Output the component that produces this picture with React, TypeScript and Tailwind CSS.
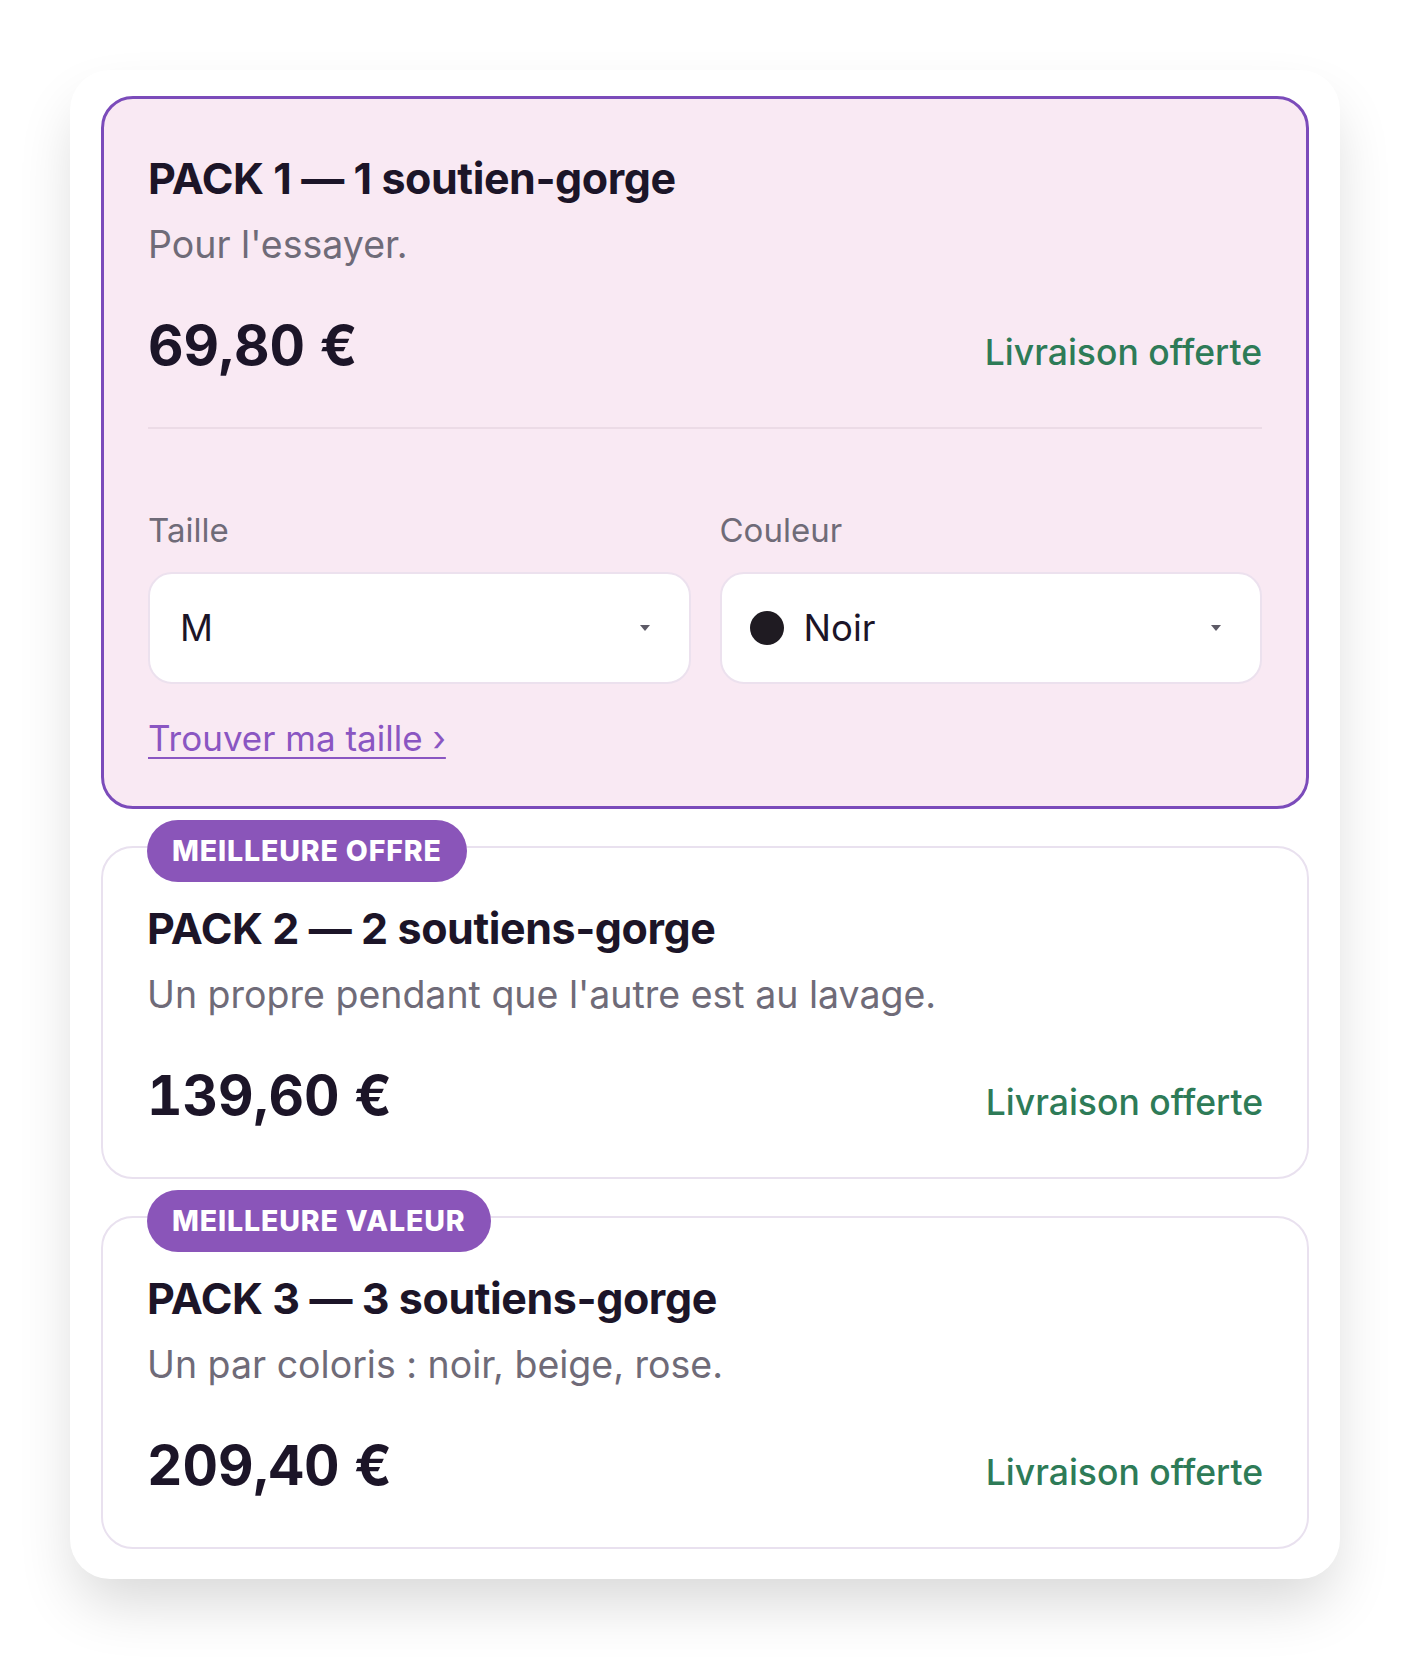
import React from 'react';

const packs = [
  {
    id: 2,
    badge: 'MEILLEURE OFFRE',
    title: 'PACK 2 — 2 soutiens-gorge',
    subtitle: "Un propre pendant que l'autre est au lavage.",
    price: '139,60 €',
  },
  {
    id: 3,
    badge: 'MEILLEURE VALEUR',
    title: 'PACK 3 — 3 soutiens-gorge',
    subtitle: 'Un par coloris : noir, beige, rose.',
    price: '209,40 €',
  },
];

const Caret = () => (
  <svg width="12" height="8" viewBox="0 0 12 8" className="shrink-0">
    <path d="M1 1h10L6 7z" fill="#5d5a66" />
  </svg>
);

const App: React.FC = () => {
  return (
    <div
      className="min-h-screen bg-white px-[70px] pt-[70px] pb-[90px] text-[#1c1528]"
      style={{ fontFamily: 'Inter, "Noto Sans", sans-serif' }}
    >
      <div className="rounded-[40px] bg-white px-[31px] pt-[26px] pb-[30px] shadow-[0_30px_60px_-8px_rgba(0,0,0,0.16)] flex flex-col gap-[37px]">
        {/* Selected pack */}
        <div className="rounded-[32px] border-[3px] border-[#7b4bba] bg-[#f9e9f3] px-[44px] pt-[52px] pb-[42px]">
          <h2 className="text-[43px] leading-[54px] font-bold tracking-[-0.01em]">PACK 1 — 1 soutien-gorge</h2>
          <p className="mt-[14px] text-[37.5px] leading-[52px] text-[#6f6b78]">Pour l'essayer.</p>
          <div className="mt-[42px] flex items-baseline justify-between">
            <span className="text-[55px] leading-[64px] font-bold tabular-nums">69,80 €</span>
            <span className="text-[35.5px] leading-[44px] font-medium text-[#2e7b57]">Livraison offerte</span>
          </div>
          <div className="mt-[50px] h-[2px] bg-[#ecdbe6]" />
          <div className="mt-[79px] grid grid-cols-2 gap-[29px]">
            <div>
              <div className="text-[33px] leading-[44px] text-[#6f6b78]">Taille</div>
              <div className="mt-[20px] flex h-[112px] items-center justify-between rounded-[24px] border-2 border-[#ece1ee] bg-white pl-[30px] pr-[38px]">
                <span className="text-[36.5px] text-[#1c1528]">M</span>
                <Caret />
              </div>
            </div>
            <div>
              <div className="text-[33px] leading-[44px] text-[#6f6b78]">Couleur</div>
              <div className="mt-[20px] flex h-[112px] items-center justify-between rounded-[24px] border-2 border-[#ece1ee] bg-white pl-[28px] pr-[38px]">
                <span className="flex items-center gap-[20px]">
                  <span className="h-[34px] w-[34px] rounded-full bg-[#1f1b22]" />
                  <span className="text-[36.5px] text-[#1c1528]">Noir</span>
                </span>
                <Caret />
              </div>
            </div>
          </div>
          <a href="#" className="mt-[28px] inline-block text-[35px] leading-[52px] text-[#8a56c2] underline underline-offset-[6px] decoration-2">
            Trouver ma taille ›
          </a>
        </div>

        {packs.map((p) => (
          <div key={p.id} className="relative rounded-[32px] border-2 border-[#e9e1ef] bg-white px-[44px] pt-[53px] pb-[50px]">
            <span className="absolute -top-[28px] left-[44px] rounded-full bg-[#8a55b9] px-[25px] text-[28.5px] leading-[62px] font-extrabold tracking-[0.03em] text-white">
              {p.badge}
            </span>
            <h2 className="text-[43px] leading-[54px] font-bold tracking-[-0.01em]">{p.title}</h2>
            <p className="mt-[14px] text-[37.5px] leading-[52px] text-[#6f6b78]">{p.subtitle}</p>
            <div className="mt-[42px] flex items-baseline justify-between">
              <span className="text-[55px] leading-[64px] font-bold tabular-nums">{p.price}</span>
              <span className="text-[35.5px] leading-[44px] font-medium text-[#2e7b57]">Livraison offerte</span>
            </div>
          </div>
        ))}
      </div>
    </div>
  );
};

export default App;
